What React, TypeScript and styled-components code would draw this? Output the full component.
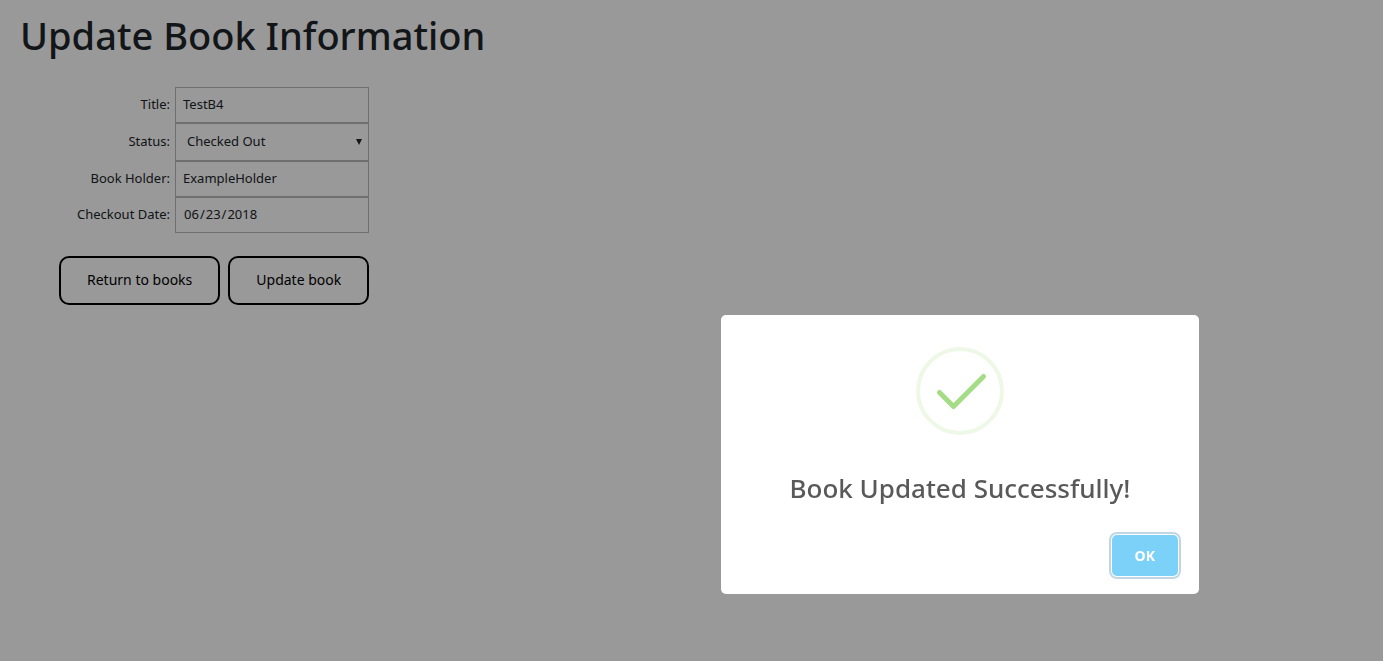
import React from "react";
import styled, { createGlobalStyle } from "styled-components";

const GlobalStyle = createGlobalStyle`
  *, *::before, *::after { box-sizing: border-box; }
  body {
    margin: 0;
    background: #fff;
    color: #212529;
    font-family: "Noto Sans", "Open Sans", sans-serif;
  }
`;

const Page = styled.main`
  padding: 11px 20px;
`;

const Heading = styled.h1`
  margin: 0;
  font-size: 38px;
  line-height: 48px;
  font-weight: 500;
`;

const BookForm = styled.form`
  margin: 28px 0 0 39px;
`;

const Fields = styled.div`
  display: grid;
  grid-template-columns: 111px 194px;
  column-gap: 5px;
  align-items: center;
`;

const Label = styled.label`
  padding-bottom: 2px;
  text-align: right;
  font-size: 13px;
  line-height: 20px;
`;

const Input = styled.input`
  width: 100%;
  height: 36px;
  padding: 0 7px 2px;
  border: 1px solid #b9b9b9;
  background: transparent;
  color: inherit;
  font-family: inherit;
  font-size: 13px;

  &::-webkit-calendar-picker-indicator { display: none; }
  &::-webkit-datetime-edit-fields-wrapper { padding: 0; }
`;

const SelectBox = styled.div`
  display: grid;
  align-items: center;

  & > * { grid-area: 1 / 1; }
`;

const Select = styled.select`
  width: 100%;
  height: 38px;
  padding: 0 11px 2px;
  border: 1px solid #b9b9b9;
  border-radius: 0;
  appearance: none;
  background: transparent;
  color: inherit;
  font-family: inherit;
  font-size: 13px;
`;

const Arrow = styled.svg`
  justify-self: end;
  margin-right: 7px;
  pointer-events: none;
`;

const Actions = styled.div`
  display: flex;
  gap: 8px;
  margin-top: 23px;
`;

const ActionButton = styled.button`
  height: 49px;
  padding: 0 26px 2px;
  border: 2px solid #000;
  border-radius: 10px;
  background: transparent;
  color: #000;
  font-family: inherit;
  font-size: 14px;
`;

const Overlay = styled.div`
  position: fixed;
  inset: 0;
  display: flex;
  align-items: flex-end;
  justify-content: flex-end;
  padding: 0 184px 67px 0;
  background: rgba(0, 0, 0, 0.4);
`;

const Modal = styled.section`
  display: flex;
  flex-direction: column;
  align-items: center;
  width: 478px;
  padding-top: 32px;
  border-radius: 5px;
  background: #fff;
`;

const ModalTitle = styled.h2`
  margin: 35px 0 0;
  color: #595959;
  font-size: 26px;
  line-height: 36px;
  font-weight: 500;
`;

const ModalFooter = styled.footer`
  align-self: stretch;
  display: flex;
  justify-content: flex-end;
  margin-top: 29px;
  padding: 0 21px 18px;
`;

const OkButton = styled.button`
  height: 41px;
  padding: 0 23px;
  border: 0;
  border-radius: 5px;
  background: #7cd1f9;
  color: #fff;
  font-family: "Open Sans", sans-serif;
  font-size: 14px;
  font-weight: 700;
  box-shadow: 0 0 0 1px #fff, 0 0 0 3px rgba(43, 114, 165, 0.29);
`;

export default function App() {
  return (
    <>
      <GlobalStyle />
      <Page>
        <Heading>Update Book Information</Heading>
        <BookForm onSubmit={(e) => e.preventDefault()}>
          <Fields>
            <Label htmlFor="title">Title:</Label>
            <Input id="title" type="text" defaultValue="TestB4" />
            <Label htmlFor="status">Status:</Label>
            <SelectBox>
              <Select id="status" defaultValue="out">
                <option value="out">Checked Out</option>
              </Select>
              <Arrow width="6" height="6" viewBox="0 0 6 6" aria-hidden="true">
                <path d="M0 0H6L3 6Z" fill="#212529" />
              </Arrow>
            </SelectBox>
            <Label htmlFor="holder">Book Holder:</Label>
            <Input id="holder" type="text" defaultValue="ExampleHolder" />
            <Label htmlFor="date">Checkout Date:</Label>
            <Input id="date" type="date" defaultValue="2018-06-23" />
          </Fields>
          <Actions>
            <ActionButton type="button">Return to books</ActionButton>
            <ActionButton type="submit">Update book</ActionButton>
          </Actions>
        </BookForm>
      </Page>
      <Overlay>
        <Modal role="dialog" aria-modal="true" aria-labelledby="modal-title">
          <svg width="88" height="88" viewBox="0 0 88 88" fill="none" aria-hidden="true">
            <circle cx="44" cy="44" r="42" stroke="#edf8e7" strokeWidth="4" />
            <path d="M23.5 45.5L37.5 59.5L67.5 29.5" stroke="#a5dc86" strokeWidth="5" strokeLinecap="round" strokeLinejoin="round" />
          </svg>
          <ModalTitle id="modal-title">Book Updated Successfully!</ModalTitle>
          <ModalFooter>
            <OkButton type="button">OK</OkButton>
          </ModalFooter>
        </Modal>
      </Overlay>
    </>
  );
}
